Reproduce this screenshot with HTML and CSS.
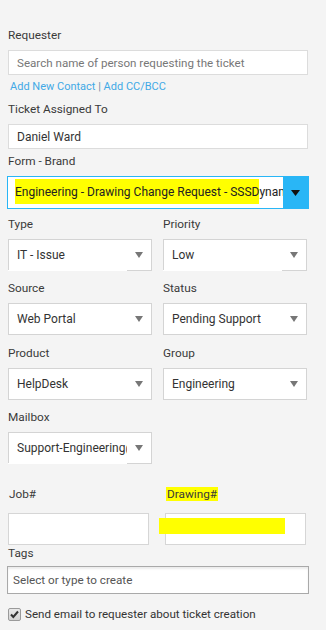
FILE: index.html
```html
<!DOCTYPE html>
<html>
<head>
<meta charset="utf-8">
<link rel="stylesheet" href="styles.css">
</head>
<body>
<div class="form">
  <div class="field">
    <label class="label">Requester</label>
    <div class="input placeholder">Search name of person requesting the ticket</div>
  </div>
  <div class="links"><span>Add New Contact</span> <span class="sep">|</span> <span>Add CC/BCC</span></div>

  <div class="field f-ticket">
    <label class="label">Ticket Assigned To</label>
    <div class="input">Daniel Ward</div>
  </div>

  <div class="field f-brand">
    <label class="label">Form - Brand</label>
    <div class="brand">
      <div class="brand-text"><span class="hl">Engineering - Drawing Change Request - SSSD</span>ynamics</div>
      <div class="brand-btn">
        <svg width="9" height="6" viewBox="0 0 9 6"><path d="M0 0H9L4.5 6Z" fill="#111"/></svg>
      </div>
    </div>
  </div>

  <div class="row r-type">
    <div class="field">
      <label class="label">Type</label>
      <div class="select cut"><div class="select-text">IT - Issue</div><div class="arrow"><svg width="8" height="6" viewBox="0 0 8 6"><path d="M0 0H8L4 6Z" fill="#777"/></svg></div></div>
    </div>
    <div class="field">
      <label class="label">Priority</label>
      <div class="select cut"><div class="select-text">Low</div><div class="arrow"><svg width="8" height="6" viewBox="0 0 8 6"><path d="M0 0H8L4 6Z" fill="#777"/></svg></div></div>
    </div>
  </div>

  <div class="row r-source">
    <div class="field">
      <label class="label">Source</label>
      <div class="select"><div class="select-text">Web Portal</div><div class="arrow"><svg width="8" height="6" viewBox="0 0 8 6"><path d="M0 0H8L4 6Z" fill="#777"/></svg></div></div>
    </div>
    <div class="field">
      <label class="label">Status</label>
      <div class="select"><div class="select-text">Pending Support</div><div class="arrow"><svg width="8" height="6" viewBox="0 0 8 6"><path d="M0 0H8L4 6Z" fill="#777"/></svg></div></div>
    </div>
  </div>

  <div class="row r-product">
    <div class="field">
      <label class="label">Product</label>
      <div class="select"><div class="select-text">HelpDesk</div><div class="arrow"><svg width="8" height="6" viewBox="0 0 8 6"><path d="M0 0H8L4 6Z" fill="#777"/></svg></div></div>
    </div>
    <div class="field">
      <label class="label">Group</label>
      <div class="select"><div class="select-text">Engineering</div><div class="arrow"><svg width="8" height="6" viewBox="0 0 8 6"><path d="M0 0H8L4 6Z" fill="#777"/></svg></div></div>
    </div>
  </div>

  <div class="row r-mailbox">
    <div class="field">
      <label class="label">Mailbox</label>
      <div class="select cut"><div class="select-text">Support-Engineering@sssdynamics.com</div><div class="arrow"><svg width="8" height="6" viewBox="0 0 8 6"><path d="M0 0H8L4 6Z" fill="#777"/></svg></div></div>
    </div>
  </div>

  <div class="row2 r-job">
    <div class="field">
      <label class="label lbl-job">Job#</label>
      <div class="box"></div>
    </div>
    <div class="field">
      <label class="label lbl-job"><span class="hl-label">Drawing#</span></label>
      <div class="box"><span class="marker"></span></div>
    </div>
  </div>

  <div class="field f-tags">
    <label class="label lbl-tags">Tags</label>
    <div class="tags">Select or type to create</div>
  </div>

  <div class="check-row">
    <span class="checkbox"><svg width="11" height="11" viewBox="0 0 11 11"><path d="M2 5.5L4.3 8L9 2.5" fill="none" stroke="#333" stroke-width="2"/></svg></span>
    <span class="check-text">Send email to requester about ticket creation</span>
  </div>
</div>
</body>
</html>
```

FILE: styles.css
```css
* { box-sizing: border-box; }

body {
  margin: 0;
  background: #f4f4f4;
  font-family: Roboto, "Noto Sans", sans-serif;
  font-size: 12px;
  color: #333;
}

.form {
  width: 300px;
  margin-left: 8px;
  padding-top: 27px;
}

.label {
  display: block;
  line-height: 16px;
  margin-bottom: 7px;
  color: #3a3a3a;
  font-size: 11.8px;
}

.input {
  height: 25px;
  border: 1px solid #dcdcdc;
  background: #fff;
  padding: 0 8px;
  display: flex;
  align-items: center;
  color: #333;
  white-space: nowrap;
  overflow: hidden;
}

.input.placeholder { color: #777; font-size: 11.6px; }

.links {
  margin-top: 5px;
  line-height: 14px;
  font-size: 11px;
  color: #42a9e6;
  padding-left: 2px;
}

.links .sep { color: #6b8ea5; }

.f-ticket { margin-top: 7px; }
.f-brand { margin-top: 4px; }

.brand {
  height: 33px;
  margin-left: -1px;
  width: 302px;
  border: 1px solid #29b6f6;
  background: #fff;
  display: flex;
}

.brand-text {
  flex: 1;
  min-width: 0;
  overflow: hidden;
  white-space: nowrap;
  padding-left: 7px;
  padding-top: 1px;
  line-height: 28px;
  color: #222;
}

.hl {
  background: #ffff00;
  padding: 6px 0 5px;
}

.brand-btn {
  width: 25px;
  background: #29b6f6;
  display: flex;
  align-items: center;
  justify-content: center;
}

.row {
  display: grid;
  grid-template-columns: 144px 144px;
  column-gap: 11px;
}

.r-type { margin-top: 7px; }
.r-source { margin-top: 9px; }
.r-product { margin-top: 10px; }
.r-mailbox { margin-top: 9px; }

.select {
  position: relative;
  height: 32px;
  border: 1px solid #d4d4d4;
  background: #fff;
  display: flex;
  align-items: center;
}

.select.cut::after {
  content: "";
  position: absolute;
  left: -1px;
  bottom: -1px;
  width: calc(100% - 23px);
  height: 1px;
  background: #fff;
}

.select-text {
  flex: 1;
  min-width: 0;
  overflow: hidden;
  white-space: nowrap;
  padding-left: 8px;
  color: #333;
}

.arrow {
  width: 24px;
  flex: none;
  display: flex;
  justify-content: center;
  align-items: center;
}

.row2 {
  display: grid;
  grid-template-columns: 141px 141px;
  column-gap: 16px;
  margin-top: 22px;
}

.lbl-job {
  margin-bottom: 11px;
  padding-left: 1px;
}

.hl-label {
  background: #ffff00;
  padding: 0 1px;
}

.box {
  position: relative;
  height: 32px;
  border: 1px solid #d6d6d6;
  background: #fff;
}

.marker {
  position: absolute;
  left: -7px;
  top: 4px;
  width: 126px;
  height: 16px;
  background: #ffff00;
}

.f-tags { margin-top: 0; }
.lbl-tags { margin-bottom: 5px; }

.tags {
  height: 28px;
  width: 302px;
  margin-left: -1px;
  border: 1px solid #a9a9a9;
  background: #fff;
  box-shadow: inset 0 2px 2px rgba(0, 0, 0, 0.08);
  padding-left: 5px;
  display: flex;
  align-items: center;
  color: #555;
  font-size: 11.7px;
}

.check-row {
  margin-top: 13px;
  display: flex;
  align-items: center;
  gap: 4px;
  color: #333;
}

.check-text { font-size: 11.6px; }

.checkbox {
  width: 13px;
  height: 13px;
  border: 1px solid #9a9a9a;
  border-radius: 2px;
  background: linear-gradient(#e9e9e9, #d4d4d4);
  display: flex;
  align-items: center;
  justify-content: center;
}
```
